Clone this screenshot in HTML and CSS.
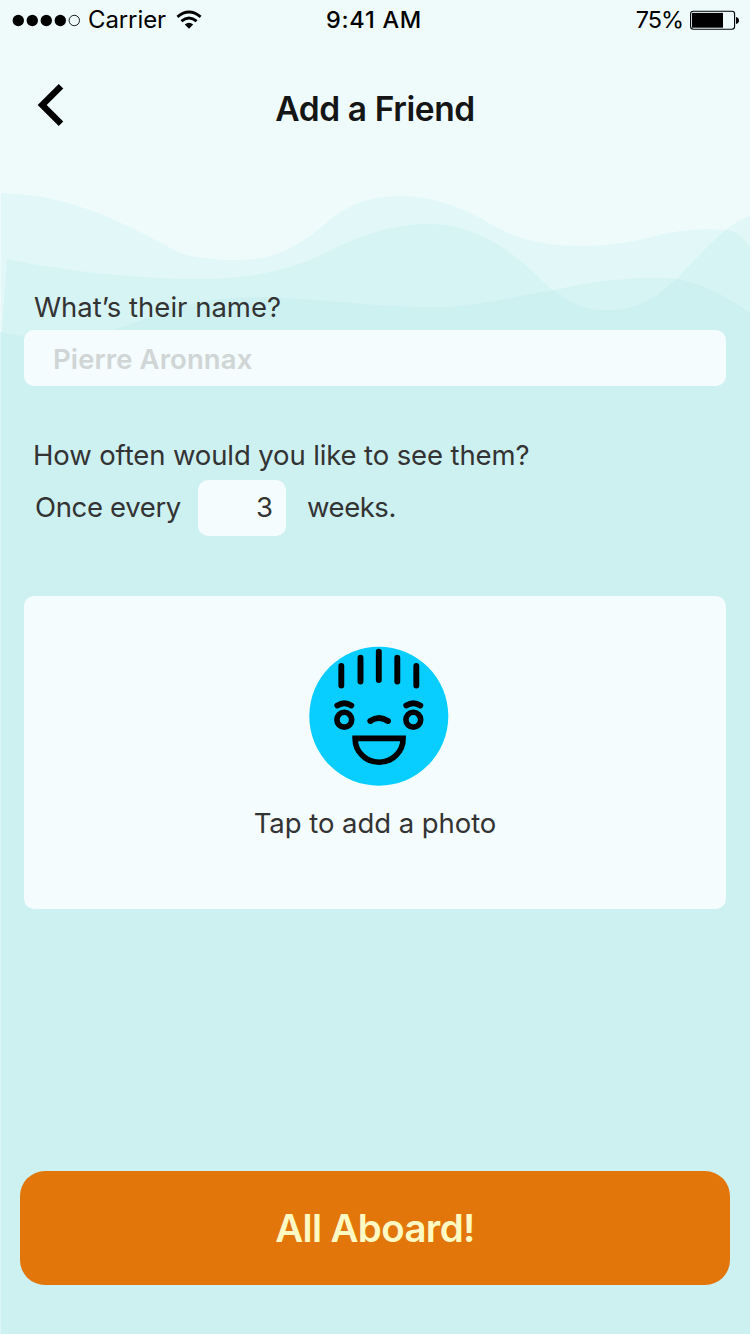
FILE: index.html
```html
<!DOCTYPE html>
<html lang="en">
<head>
<meta charset="utf-8">
<title>Add a Friend</title>
<link rel="stylesheet" href="styles.css">
</head>
<body>
<main class="screen">
  <svg class="waves" viewBox="0 0 750 1334" aria-hidden="true">
    <path fill="#dcf5f5" d="M0 332H2V1334H0Z"/>
    <path fill="#e1f7f8" d="M1 193C72 195 122 222 180 253C205 261 245 262 268 257C292 250 310 237 325 224C340 211 360 197 399 196C431 196 460 207 482 219C510 237 538 246 582 246C613 246 637 241 659 235C681 230 700 228 722 230C738 231 746 239 750 248V1334H1Z"/>
    <path fill="#e1f7f8" d="M724 231C733 224 741 219 750 216V260H700Z"/>
    <path fill="#d6f4f3" d="M7 259C75 273 140 279 200 279C255 279 292 268 317 257C344 244 381 224 429 224C472 224 507 247 534 273C560 299 577 310 607 310C638 310 665 293 683 272C699 256 711 242 726 230C738 231 746 239 750 248V1334H2V333Z"/>
    <path fill="#cdf0f1" d="M1 332C44 342 86 340 128 325C165 312 184 302 230 298C290 294 352 306 430 307C472 308 511 297 554 290C577 307 589 310 607 310C638 310 658 296 676 279C704 283 726 297 750 313V1334H1Z"/>
    <path fill="#d6f4f3" d="M554 290C590 282 620 278 650 278C660 278 669 278 676 279C658 297 638 310 607 310C584 310 569 303 554 290Z"/>
  </svg>

  <div class="status">
    <div class="carrier">
      <svg width="70" height="14" viewBox="0 0 70 14"><circle cx="6.3" cy="7.5" r="5.7"/><circle cx="20.3" cy="7.5" r="5.7"/><circle cx="34.3" cy="7.5" r="5.7"/><circle cx="48.3" cy="7.5" r="5.7"/><circle cx="62.3" cy="7.5" r="5.2" fill="none" stroke="#000" stroke-width=".9"/></svg>
      <span class="carrier-name">Carrier</span>
      <svg class="wifi" width="26" height="20" viewBox="0 0 26 20"><g fill="none" stroke="#000" stroke-width="2.8"><path d="M1.4 6.8Q13 -2.8 24.6 6.8"/><path d="M5.4 11.2Q13 4.9 20.6 11.2"/></g><path d="M8.8 14.5Q13 11 17.2 14.5L13 18.8Z"/></svg>
    </div>
    <span class="time">9:41 AM</span>
    <div class="battery">
      <span class="percent">75%</span>
      <svg width="50" height="20" viewBox="0 0 50 20"><rect x=".6" y="1.3" width="44" height="18" rx="2.7" fill="none" stroke="#000" stroke-width="1.1"/><rect x="2" y="2.9" width="31" height="14.8"/><path d="M46 7Q49 7.7 49 10.5T46 14Z"/></svg>
    </div>
  </div>

  <header class="header">
    <svg class="back" width="30" height="46" viewBox="0 0 30 46"><path d="M25 4.3L6.2 23L25 41.7" fill="none" stroke="#000" stroke-width="6.4"/></svg>
    <h1 class="title">Add a Friend</h1>
  </header>

  <section class="form">
    <label class="label name-label">What’s their name?</label>
    <div class="name-input"><span class="placeholder">Pierre Aronnax</span></div>
    <p class="label often-label">How often would you like to see them?</p>
    <div class="frequency">
      <span class="label once">Once every</span>
      <span class="number label">3</span>
      <span class="label weeks">weeks.</span>
    </div>
    <div class="photo">
      <svg class="face" width="140" height="140" viewBox="0 0 140 140">
        <circle cx="69.8" cy="70.2" r="69.5" fill="#08cdff"/>
        <g fill="none" stroke="#000" stroke-width="5.9" stroke-linecap="round">
          <path d="M32.3 20V39.5M51.5 11.8V35.5M69.8 5.7V34M88.3 11.8V35.5M107.3 20V39.5"/>
          <path d="M28.3 59.5Q35.3 55.2 42.3 59.5M97.3 59.5Q104.3 55.2 111.3 59.5M61.3 75Q70 68.8 79 75"/>
          <circle cx="35.3" cy="73.7" r="7.4" stroke-width="5.6"/><circle cx="104.3" cy="73.7" r="7.4" stroke-width="5.6"/>
          <path stroke-linecap="butt" stroke-width="5.6" d="M46.1 92.4H94.1C94.1 105.7 83.4 116.2 70.1 116.2S46.1 105.7 46.1 92.4Z"/>
        </g>
      </svg>
      <span class="label tap">Tap to add a photo</span>
    </div>
  </section>
  <button class="cta">All Aboard!</button>
</main>
</body>
</html>
```
FILE: styles.css
```css
* { box-sizing: border-box; }
body { margin: 0; font-family: Inter, "Liberation Sans", sans-serif; }
.screen {
  position: relative;
  isolation: isolate;
  display: flex;
  flex-direction: column;
  width: 750px;
  height: 1334px;
  overflow: hidden;
  background: #effbfb;
}
.waves { position: absolute; inset: 0; z-index: -1; width: 750px; height: 1334px; }
.status {
  display: grid;
  grid-template-columns: 1fr auto 1fr;
  align-items: center;
  height: 40px;
  padding: 0 10px 0 12px;
  font-size: 24px;
  line-height: 40px;
  white-space: nowrap;
}
.carrier, .battery { display: flex; align-items: center; }
.carrier-name { margin-left: 6px; letter-spacing: -0.1px; }
.wifi { margin-left: 10px; }
.time { margin-right: 4px; font-size: 23.5px; font-weight: 550; letter-spacing: 0.75px; }
.battery { justify-content: flex-end; gap: 7px; }
.percent { font-size: 23.5px; letter-spacing: -1.1px; }
.header {
  display: grid;
  grid-template-columns: 30px 1fr 30px;
  align-items: center;
  height: 100px;
  padding: 0 36px;
  margin-top: 15px;
}
.title {
  margin: 8px 0 0;
  color: #151515;
  font-size: 33.5px;
  font-weight: 600;
  line-height: 40px;
  text-align: center;
  letter-spacing: -0.4px;
}
.form { display: flex; flex-direction: column; padding: 132px 24px 0; }
.label { color: #333; font-size: 27.5px; line-height: 40px; white-space: nowrap; }
.name-label { margin-left: 10px; }
.name-input {
  display: flex;
  align-items: center;
  height: 56px;
  margin-top: 3px;
  padding: 2px 29px 0;
  border-radius: 10px;
  background: #f4fcfe;
}
.placeholder { color: #d0d5d5; font-size: 27.5px; font-weight: 600; line-height: 40px; letter-spacing: 0.1px; }
.often-label { margin: 49px 0 0 9px; letter-spacing: -0.12px; }
.frequency { display: flex; align-items: center; height: 56px; margin-top: 5px; padding-left: 11px; }
.once { width: 163px; margin-top: -2px; letter-spacing: -0.35px; }
.number {
  width: 88px;
  padding-right: 13px;
  border-radius: 10px;
  background: #f4fcfe;
  line-height: 54px;
  padding-bottom: 2px;
  text-align: right;
}
.weeks { margin: -2px 0 0 21px; letter-spacing: -0.45px; }
.photo {
  display: flex;
  flex-direction: column;
  align-items: center;
  height: 313px;
  margin-top: 60px;
  padding-top: 50px;
  border-radius: 10px;
  background: #f4fcfe;
}
.face { margin-left: 7px; }
.tap { margin-top: 17px; letter-spacing: -0.05px; }
.cta {
  height: 114px;
  margin: auto 20px 49px;
  padding: 0;
  border: 0;
  border-radius: 25px;
  background: #e2760b;
  color: #fff9c4;
  font: 600 38.5px/114px Inter, "Liberation Sans", sans-serif;
  letter-spacing: -0.65px;
}
```
